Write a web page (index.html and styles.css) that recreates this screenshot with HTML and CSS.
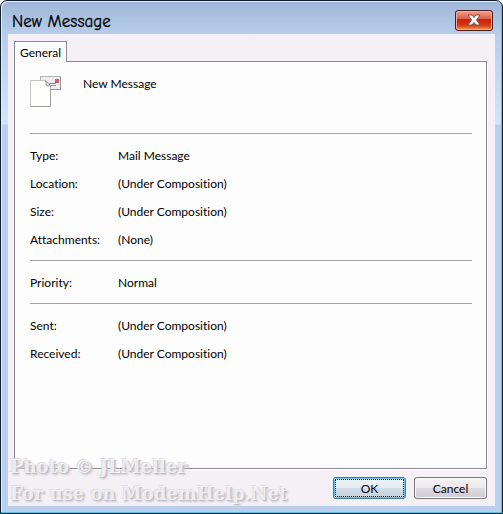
FILE: index.html
```html
<!DOCTYPE html>
<html lang="en">
<head>
    <meta charset="UTF-8">
    <meta name="viewport" content="width=device-width, initial-scale=1.0">
    <title>New Message</title>
    <link rel="stylesheet" href="styles.css">
</head>
<body>
    <div class="window">
        <header class="titlebar">
            <h1>New Message</h1>
            <button type="button" class="close-btn" aria-label="Close">
                <svg width="14" height="12" viewBox="0 0 14 12">
                    <path d="M1 1h4l2 2.500L9 1h4L9.500 6 13 11H9L7 8.500 5 11H1l3.500-5z" fill="#fff" stroke="#7b5555" stroke-width="1"/>
                </svg>
            </button>
        </header>
        <main class="client">
            <div class="tabs">
                <button type="button" class="tab">General</button>
            </div>
            <section class="panel">
                <div class="summary">
                    <svg class="mail-icon" width="32" height="32" viewBox="0 0 32 32">
                        <rect x="10.500" y="0.500" width="20" height="13" fill="#eeeeef" stroke="#b4b4b8"/>
                        <path d="M10 13.500h21M30.500 1v13" stroke="#929297" fill="none"/>
                        <rect x="25" y="3" width="4" height="4" fill="#d9586b"/>
                        <path d="M19 7.500h7M21 9.500h5" stroke="#8f929c"/>
                        <path d="M.5 4.500h15l5 5v21H.5z" fill="#fefefb" stroke="#c4c4c4"/>
                        <path d="M20.500 9.500v21H.5" fill="none" stroke="#a0a0a0"/>
                        <path d="M15.500 4.500l1 5.500 4-.5z" fill="#e6e6e6" stroke="#9a9a9a"/>
                    </svg>
                    <span>New Message</span>
                </div>
                <dl class="group">
                    <dt>Type:</dt><dd>Mail Message</dd>
                    <dt>Location:</dt><dd>(Under Composition)</dd>
                    <dt>Size:</dt><dd>(Under Composition)</dd>
                    <dt>Attachments:</dt><dd>(None)</dd>
                </dl>
                <dl class="group">
                    <dt>Priority:</dt><dd>Normal</dd>
                </dl>
                <dl class="group">
                    <dt>Sent:</dt><dd>(Under Composition)</dd>
                    <dt>Received:</dt><dd>(Under Composition)</dd>
                </dl>
            </section>
            <div class="actions">
                <button type="button" class="btn btn-default">OK</button>
                <button type="button" class="btn">Cancel</button>
            </div>
        </main>
        <p class="watermark">Photo © JLMeller<br>For use on ModemHelp.Net</p>
    </div>
</body>
</html>
```

FILE: styles.css
```css
* {
    box-sizing: border-box;
}
body {
    margin: 0;
    background-color: #fff;
    color: #000;
    font-family: "Segoe UI", Lato, sans-serif;
    font-size: 12px;
    font-variant-ligatures: none;
}
h1, dl, dd, p {
    margin: 0;
}
button {
    font-family: inherit;
    font-size: inherit;
    color: inherit;
    padding: 0;
}

/* window frame */
.window {
    position: relative;
    display: flex;
    flex-direction: column;
    min-height: 100vh;
    padding: 0 7px 7px;
    border: 1px solid #10202c;
    border-radius: 7px 7px 0 0;
    background: linear-gradient(#9fb6d9, #b7cdeb 33px, #d3e5f8 123px, #b8d0ee 124px);
    box-shadow: inset -1px -1px #5cc3e6, inset 1px 1px #e2edf8;
}
.titlebar {
    display: flex;
    justify-content: space-between;
    align-items: center;
    height: 33px;
    padding: 8px 2px 0 4px;
}
.titlebar h1 {
    font-family: "Comic Sans MS", "Comic Neue", Lato, sans-serif;
    font-size: 17px;
    font-weight: normal;
    color: #000;
    -webkit-text-stroke: 0.3px #000;
}
.close-btn {
    display: flex;
    justify-content: center;
    align-items: center;
    width: 38px;
    height: 21px;
    margin-bottom: 3px;
    border: 1px solid #4a1a20;
    border-radius: 3px;
    background: linear-gradient(#f0a08c, #e0604a 40%, #cb200c 45%, #d43a14 75%, #f0a04a);
    box-shadow: inset 0 0 0 1px #f0b0a0;
}

/* tab and page */
.client {
    flex: 1;
    display: flex;
    flex-direction: column;
    padding: 7px 8px 7px 6px;
    background-color: #f4f0f6;
}
.tabs {
    display: flex;
    height: 20px;
}
.tab {
    height: 21px;
    padding: 0 5px;
    border: 1px solid #8b8b91;
    border-bottom: none;
    background-color: #fefdfe;
    z-index: 1;
}
.panel {
    flex: 1;
    padding: 0 14px 0 15px;
    border: 1px solid #8b8b91;
    background-color: #fefdfe;
    box-shadow: 1px 1px #fff;
}
.summary {
    display: flex;
    gap: 21px;
    height: 71px;
    padding-top: 14px;
}
.group {
    display: grid;
    grid-template-columns: 88px 1fr;
    padding: 8px 0 6px;
    border-top: 1px solid #a3a3a8;
    line-height: 28px;
}

/* buttons */
.actions {
    display: flex;
    justify-content: flex-end;
    gap: 8px;
    padding-top: 8px;
}
.btn {
    width: 73px;
    height: 22px;
    border: 1px solid #77747c;
    border-radius: 3px;
    background: linear-gradient(#f3f1f4, #ebe9ed 49%, #dddbe0 50%, #cfcdd3);
    box-shadow: inset 0 0 0 1px #fbfafc;
}
.btn-default {
    border-color: #3f7f9f;
    background: linear-gradient(#eff3f7, #e5ebf1 49%, #d3dde6 50%, #c5d2de);
    box-shadow: inset 0 0 0 1px #6ac6ea;
    outline: 1px dotted #111;
    outline-offset: -3px;
}

.watermark {
    position: absolute;
    left: 9px;
    bottom: 6px;
    font-family: "DejaVu Serif", serif;
    font-size: 18px;
    font-weight: bold;
    line-height: 27px;
    color: rgba(250, 249, 251, 0.8);
    text-shadow: 1px 1px 1px #bfbcc4, 2px 2px 2px #ccc9d0, -1px -1px 1px #dcd9e0;
    pointer-events: none;
}
```
